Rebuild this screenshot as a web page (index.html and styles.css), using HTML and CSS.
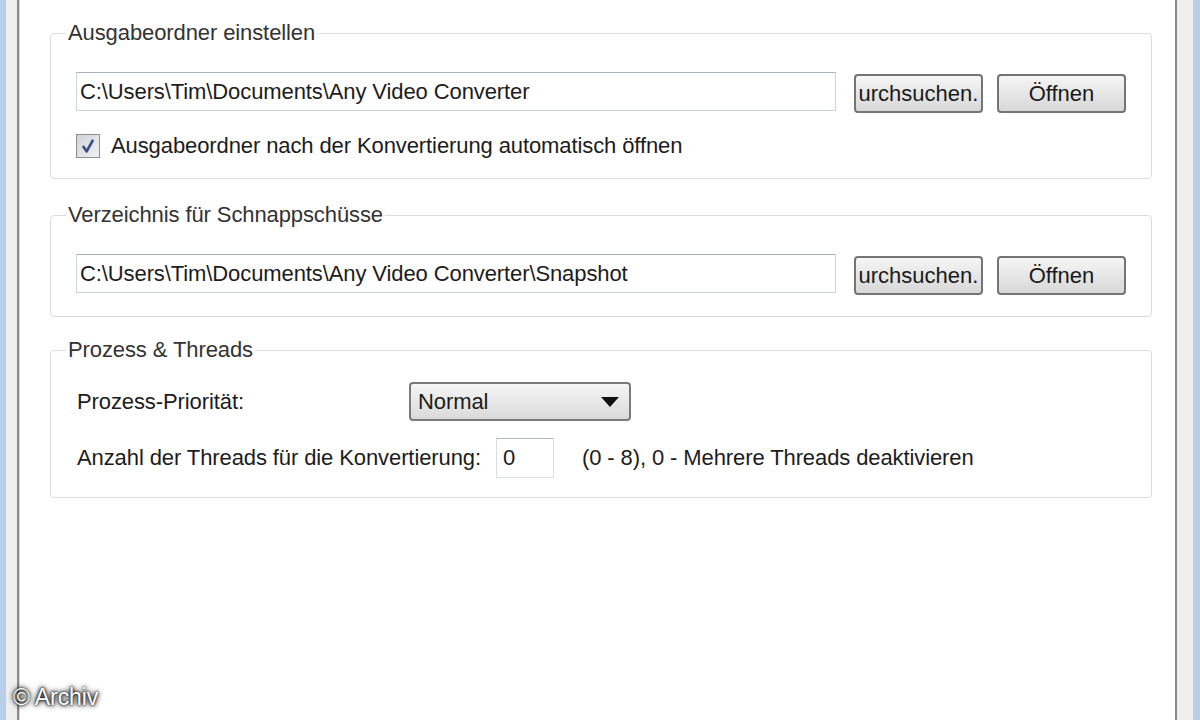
FILE: index.html
```html
<!DOCTYPE html>
<html lang="de">
<head>
    <meta charset="UTF-8">
    <title>Optionen - Any Video Converter</title>
    <link rel="stylesheet" href="styles.css">
</head>
<body>
    <div class="frame-left"></div>

    <div class="window">
        <fieldset class="group">
            <legend>Ausgabeordner einstellen</legend>
            <div class="path-row">
                <input type="text" class="path-input" value="C:\Users\Tim\Documents\Any Video Converter">
                <button class="btn">urchsuchen.</button>
                <button class="btn">Öffnen</button>
            </div>
            <label class="check-row">
                <span class="checkbox">
                    <svg width="18" height="18" viewBox="0 0 16 16">
                        <path d="M3.5 8 L6.8 12.8 L12.5 2.5" fill="none" stroke="#3d4f86" stroke-width="2.4" stroke-linejoin="round"/>
                    </svg>
                </span>
                Ausgabeordner nach der Konvertierung automatisch öffnen
            </label>
        </fieldset>

        <fieldset class="group group-snap">
            <legend>Verzeichnis für Schnappschüsse</legend>
            <div class="path-row">
                <input type="text" class="path-input" value="C:\Users\Tim\Documents\Any Video Converter\Snapshot">
                <button class="btn">urchsuchen.</button>
                <button class="btn">Öffnen</button>
            </div>
        </fieldset>

        <fieldset class="group group-proc">
            <legend>Prozess &amp; Threads</legend>
            <div class="proc-row">
                <span class="proc-label">Prozess-Priorität:</span>
                <div class="select">
                    <span>Normal</span>
                    <svg width="18" height="10" viewBox="0 0 18 10">
                        <path d="M0 0 H18 L9 10 Z" fill="#111"/>
                    </svg>
                </div>
            </div>
            <div class="proc-row threads-row">
                <span>Anzahl der Threads für die Konvertierung:</span>
                <input type="text" class="threads-input" value="0">
                <span class="threads-note">(0 - 8), 0 - Mehrere Threads deaktivieren</span>
            </div>
        </fieldset>
    </div>

    <div class="frame-right"></div>

    <div class="watermark">© Archiv</div>
</body>
</html>
```

FILE: styles.css
```css
body {
    margin: 0;
    height: 720px;
    display: flex;
    overflow: hidden;
    background: #fff;
    font-family: "Liberation Sans", Arial, sans-serif;
    font-size: 22px;
    letter-spacing: -0.1px;
    color: #1c1c1c;
}

.frame-left {
    width: 20px;
    background: linear-gradient(to right, #b9cfe8 0 6px, #f0eeee 6px 17px, #8a8a8a 17px 19px, #d8d8d8 19px 20px);
}
.frame-right {
    width: 25px;
    background: linear-gradient(to right, #8a8a8a 0 2px, #f0eeee 2px 18px, #b9cfe8 18px);
}

.window {
    flex: 1;
    padding: 22px 23px 0 30px;
}

.group {
    margin: 0 0 25px;
    padding: 28px 25px 19px 25px;
    border: 1px solid #dadde0;
    border-radius: 4px;
}
.group legend {
    margin-left: -10px;
    padding: 0 2px;
    line-height: 22px;
    color: #333;
}
.group-snap {
    padding-bottom: 21px;
    margin-bottom: 22px;
}
.group-proc {
    padding-top: 21px;
}

.path-row {
    display: flex;
    align-items: flex-start;
}
.path-input {
    flex: 1;
    height: 39px;
    box-sizing: border-box;
    padding: 0 3px;
    border: 1px solid #ccd3da;
    border-top-color: #a9b1ba;
    font-family: inherit;
    font-size: 22px;
    letter-spacing: -0.1px;
    color: #1c1c1c;
}

.btn {
    width: 129px;
    height: 39px;
    margin-top: 2px;
    margin-left: 18px;
    padding: 0;
    border: 2px solid #747474;
    border-radius: 4px;
    background: linear-gradient(#f6f6f6, #e6e6e6 50%, #d8d8d8);
    font-family: inherit;
    font-size: 22px;
    color: #1a1a1a;
    white-space: nowrap;
}
.btn + .btn {
    margin-left: 14px;
}

.check-row {
    display: flex;
    align-items: center;
    gap: 11px;
    height: 26px;
    margin-top: 20px;
}
.checkbox {
    width: 22px;
    height: 22px;
    display: flex;
    align-items: center;
    justify-content: center;
    border: 1px solid #8e8f8f;
    background: linear-gradient(135deg, #cfd3da, #f2f2f4);
}

.proc-row {
    display: flex;
    align-items: center;
    padding-left: 1px;
}
.proc-label {
    width: 332px;
}
.select {
    width: 222px;
    height: 39px;
    box-sizing: border-box;
    display: flex;
    align-items: center;
    justify-content: space-between;
    padding: 0 10px 0 7px;
    border: 2px solid #7a7a7a;
    border-radius: 4px;
    background: linear-gradient(#f5f5f5, #e8e8e8 50%, #d9d9d9);
}

.threads-row {
    margin-top: 17px;
}
.threads-input {
    width: 58px;
    height: 40px;
    box-sizing: border-box;
    margin-left: 15px;
    padding: 0 6px;
    border: 1px solid #d8dde2;
    border-top-color: #b4bbc3;
    font-family: inherit;
    font-size: 22px;
    color: #1c1c1c;
}
.threads-note {
    margin-left: 28px;
}

.watermark {
    position: absolute;
    left: 13px;
    top: 684px;
    color: #fff;
    font-size: 23px;
    text-shadow: 0 0 2px #000, 0 0 4px #000, 0 0 6px #333;
}
```
